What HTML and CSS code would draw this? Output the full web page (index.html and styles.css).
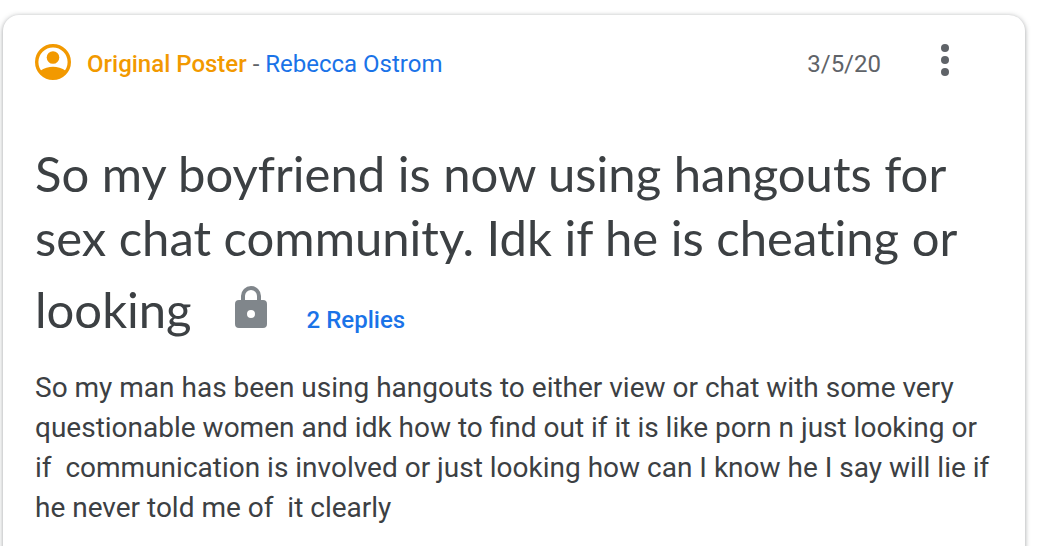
FILE: index.html
```
<!DOCTYPE html>
<html lang="en">
<head>
<meta charset="utf-8">
<title>Hangouts Help Community</title>
<link rel="stylesheet" href="styles.css">
</head>
<body>
<article class="card">
  <header class="post-header">
    <svg class="avatar" viewBox="0 0 36 36" aria-hidden="true">
      <circle cx="18" cy="18" r="16.300" fill="#fff" stroke="#f29900" stroke-width="3.400"/>
      <circle cx="18" cy="13.500" r="6.300" fill="#f29900"/>
      <path d="M5 27C9 24 14 22.800 18 22.800S27 24 31 27C25 37 11 37 5 27Z" fill="#f29900"/>
    </svg>
    <div class="author"><span class="badge">Original Poster</span> - <a class="name" href="#">Rebecca Ostrom</a></div>
    <time class="date" datetime="2020-03-05">3/5/20</time>
    <button class="menu" type="button" aria-label="More options">
      <svg class="dots" viewBox="0 0 8 32" aria-hidden="true"><circle cx="4" cy="4" r="4"/><circle cx="4" cy="16" r="4"/><circle cx="4" cy="28" r="4"/></svg>
    </button>
  </header>
  <h1 class="title">So my boyfriend is now using hangouts for<br>sex chat community. Idk if he is cheating or</h1>
  <div class="title-end">
    <span class="title">looking</span>
    <svg class="lock" viewBox="0 0 32 42" role="img" aria-label="Locked"><path fill="#80868b" fill-rule="evenodd" d="M4 14H6V10a10 10 0 0 1 20 0V14H28a4 4 0 0 1 4 4V38a4 4 0 0 1-4 4H4a4 4 0 0 1-4-4V18a4 4 0 0 1 4-4ZM10 14H22V10a6 6 0 0 0-12 0ZM16 24a4 4 0 1 0 0 8a4 4 0 0 0 0-8Z"/></svg>
    <a class="replies" href="#">2 Replies</a>
  </div>
  <p class="body">So my man has been using hangouts to either view or chat with some very questionable women and idk how to find out if it is like porn n just looking or if&nbsp; communication is involved or just looking how can I know he I say will lie if he never told me of&nbsp; it clearly</p>
</article>
</body>
</html>
```
FILE: styles.css
```
* { box-sizing: border-box; }
body { margin: 0; background: #fff; color: #3c4043; font-family: Roboto, sans-serif; }
.card { margin: 15px 15px 0 3px; padding: 29px 32px 40px; border-radius: 16px; background: #fff; box-shadow: 0 1px 5px rgba(60, 64, 67, .5); }
.post-header { display: flex; align-items: flex-start; }
.avatar { width: 36px; height: 36px; }
.author { flex: 1; margin-left: 16px; font-size: 24px; line-height: 40px; color: #5f6368; }
.badge { color: #f29900; font-weight: 500; }
.name, .replies { color: #1a73e8; text-decoration: none; }
.date { color: #5f6368; font-size: 24px; line-height: 40px; }
.menu { width: 32px; height: 32px; margin: 0 32px 0 48px; padding: 0; border: 0; background: none; }
.dots { display: block; width: 8px; height: 32px; margin: auto; fill: #5f6368; }
.title { margin: 0; font-family: Lato, sans-serif; font-size: 49px; line-height: 64px; font-weight: 400; font-variant-ligatures: none; }
h1.title { margin-top: 57px; }
.title-end { display: flex; align-items: baseline; padding-top: 8px; }
.lock { width: 32px; height: 42px; margin-left: 43px; }
.replies { margin-left: 40px; font-size: 24px; font-weight: 500; }
.body { margin: 27px 0 0; font-size: 28px; line-height: 40px; }
```
